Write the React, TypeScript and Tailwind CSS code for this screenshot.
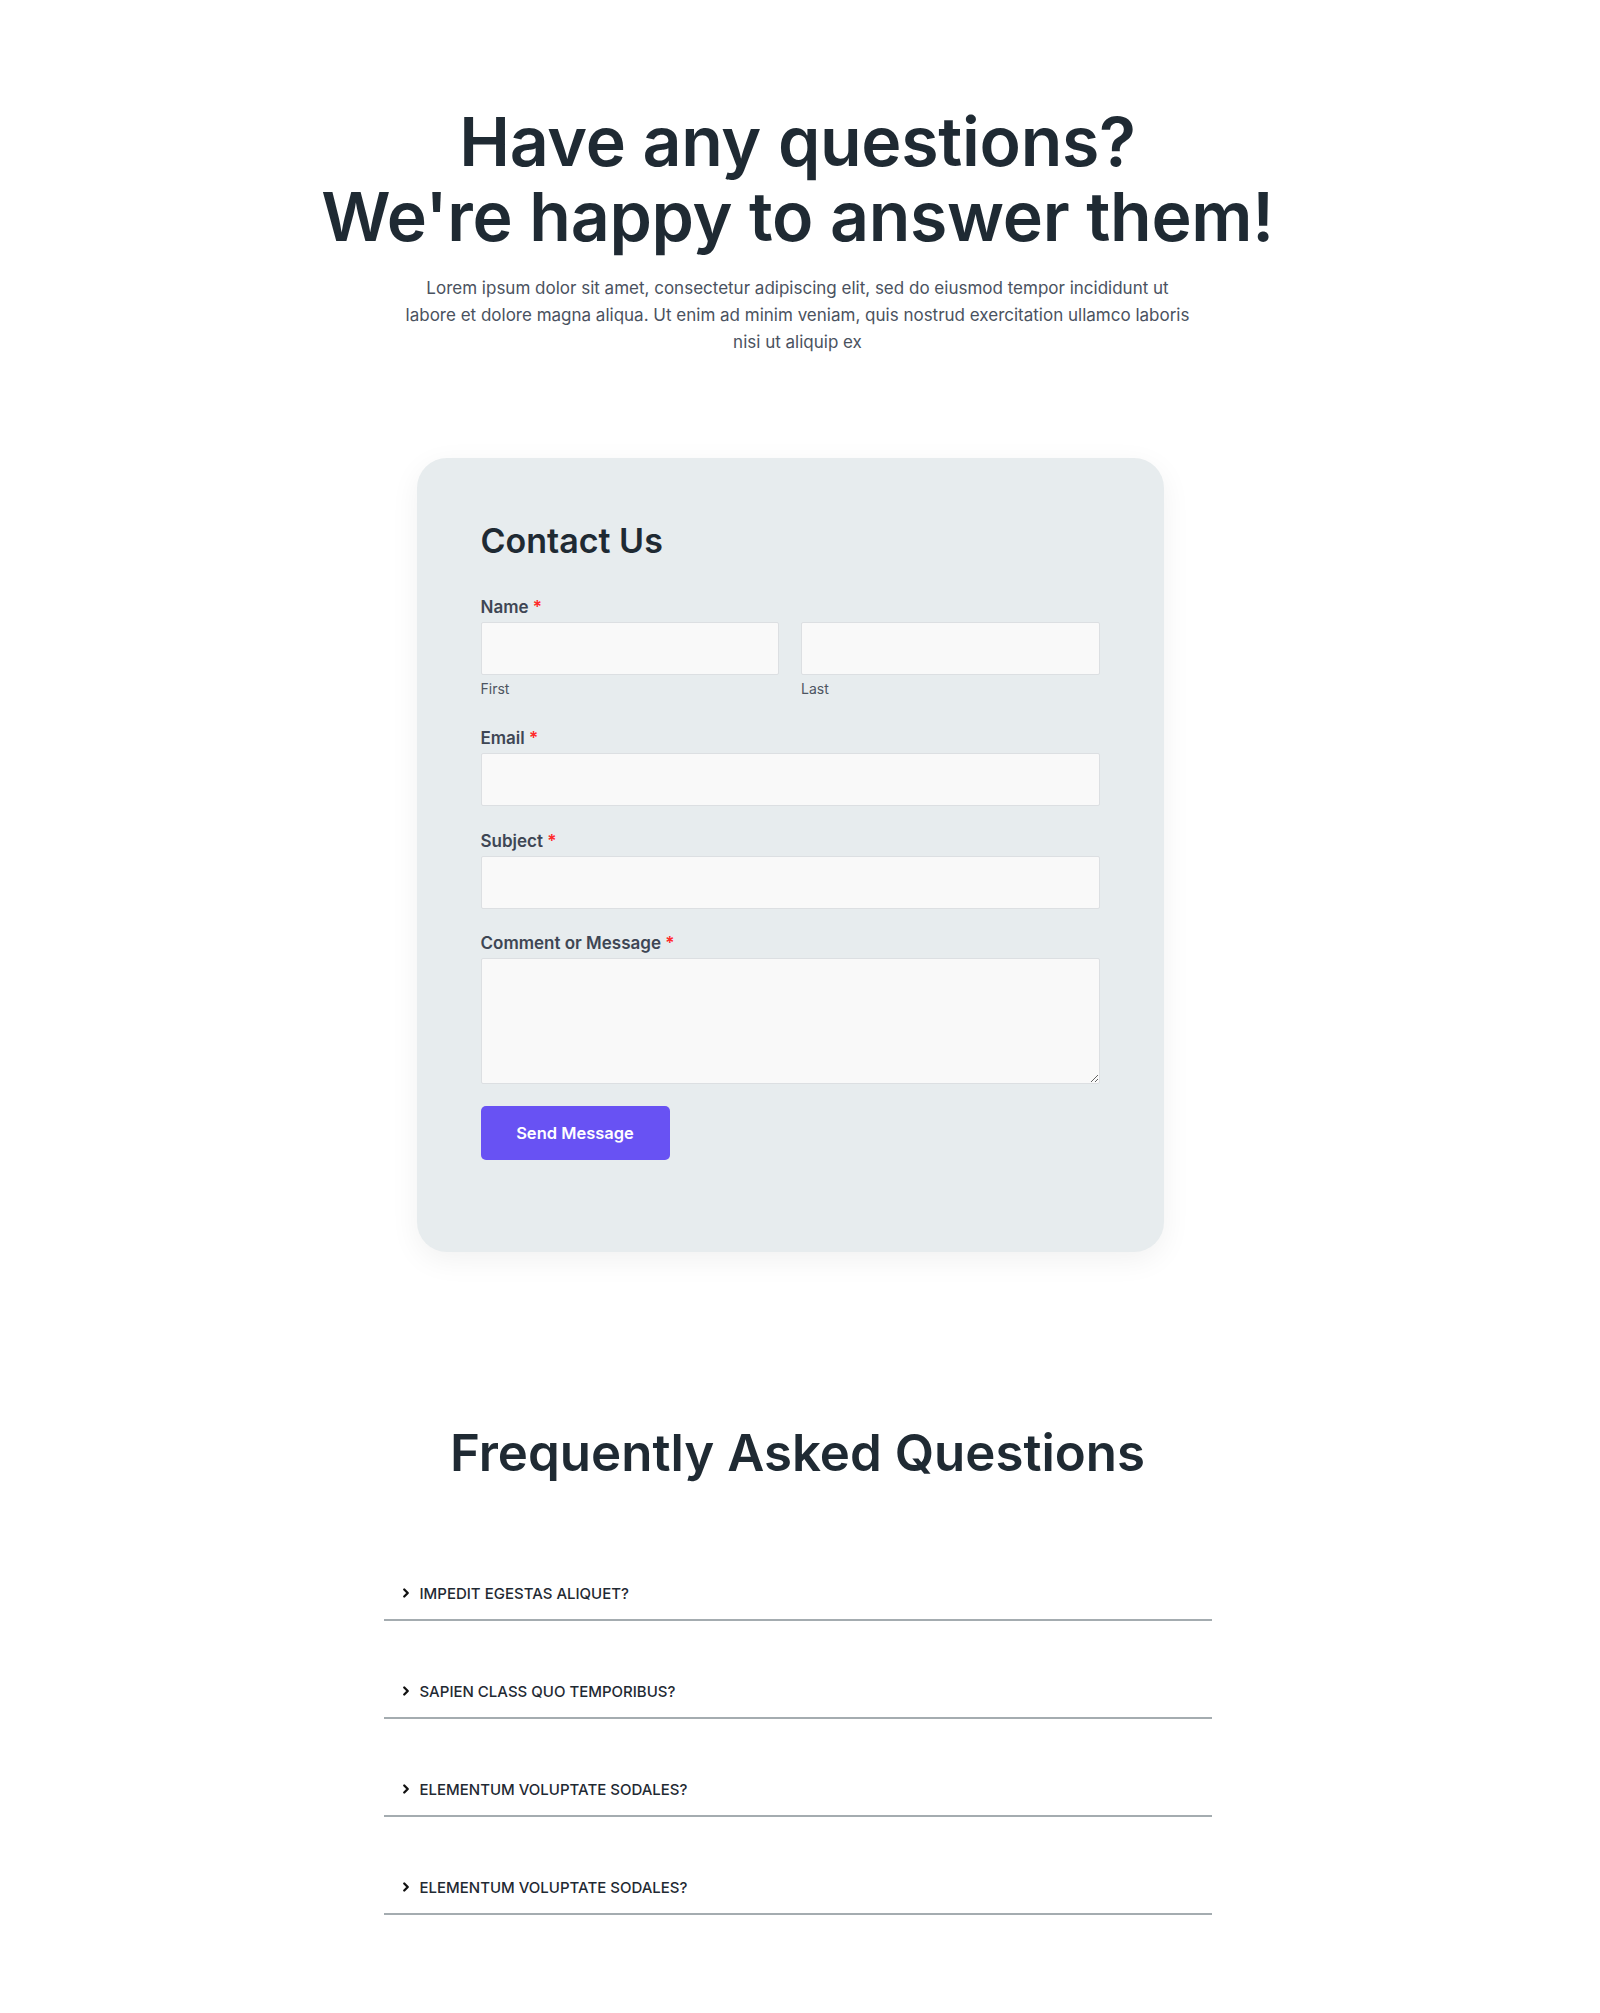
import React from "react";
import { ChevronRight } from "lucide-react";

const FAQS = [
  "Impedit egestas aliquet?",
  "Sapien class quo temporibus?",
  "Elementum voluptate sodales?",
  "Elementum voluptate sodales?",
];

const Label: React.FC<{ text: string }> = ({ text }) => (
  <label className="block text-[17px] font-semibold text-[#3e4654] leading-[22px] mb-[4px]">
    {text} <span className="text-[#ff2a2a]">*</span>
  </label>
);

const inputCls =
  "block w-full h-[53px] bg-[#f9f9f9] border border-[#dcdfe2] rounded-[2px] outline-none";

const App: React.FC = () => {
  return (
    <div className="min-h-[2013px] bg-white pr-[5px] font-['Inter','Noto_Sans',sans-serif] text-[#1f2a33]">
      {/* Hero */}
      <section className="flex flex-col items-center pt-[104px]">
        <h1 className="text-center text-[68px] font-semibold leading-[75px] tracking-[-0.3px] text-[#1f2a33]">
          Have any questions?
          <br />
          We're happy to answer them!
        </h1>
        <p className="mt-[21px] max-w-[790px] text-center text-[17px] leading-[27px] text-[#4a5260]">
          Lorem ipsum dolor sit amet, consectetur adipiscing elit, sed do eiusmod tempor incididunt ut
          labore et dolore magna aliqua. Ut enim ad minim veniam, quis nostrud exercitation ullamco laboris
          nisi ut aliquip ex
        </p>
      </section>

      {/* Contact card */}
      <section className="flex justify-center mt-[102px] pr-[15px]">
        <div className="w-[747px] h-[794px] rounded-[30px] bg-[#e7ecee] px-[64px] pt-[59px] shadow-[0_8px_30px_rgba(0,0,0,0.06)]">
          <h2 className="text-[34px] font-semibold leading-[48px] text-[#1f2a33]">Contact Us</h2>

          <div className="mt-[31px]">
            <Label text="Name" />
            <div className="grid grid-cols-2 gap-[22px]">
              <div>
                <input className={inputCls} />
                <div className="mt-[5px] text-[14px] leading-[18px] text-[#4d5561]">First</div>
              </div>
              <div>
                <input className={inputCls} />
                <div className="mt-[5px] text-[14px] leading-[18px] text-[#4d5561]">Last</div>
              </div>
            </div>
          </div>

          <div className="mt-[29px]">
            <Label text="Email" />
            <input className={inputCls} />
          </div>

          <div className="mt-[24px]">
            <Label text="Subject" />
            <input className={inputCls} />
          </div>

          <div className="mt-[23px]">
            <Label text="Comment or Message" />
            <textarea className="block w-full h-[126px] bg-[#f9f9f9] border border-[#dcdfe2] rounded-[2px] outline-none" />
          </div>

          <button className="mt-[22px] h-[54px] w-[189px] rounded-[5px] bg-[#6852f3] text-[16.5px] font-semibold text-white">
            Send Message
          </button>
        </div>
      </section>

      {/* FAQ */}
      <section className="flex flex-col items-center mt-[169px]">
        <h2 className="text-center text-[51px] font-semibold leading-[64px] text-[#1f2a33]">
          Frequently Asked Questions
        </h2>
        <div className="w-[828px] mt-[99px]">
          {FAQS.map((q, i) => (
            <div
              key={i}
              className={`flex items-center gap-[7px] pl-[15px] pb-[15px] border-b-2 border-[#a4acb0] ${i === 0 ? "" : "pt-[61px]"}`}
            >
              <ChevronRight className="w-[14px] h-[14px] text-[#111] -mt-[3px]" strokeWidth={4} />
              <span className="text-[15px] font-medium uppercase leading-[20px] text-[#1f2a33]">{q}</span>
            </div>
          ))}
        </div>
      </section>
    </div>
  );
};

export default App;
